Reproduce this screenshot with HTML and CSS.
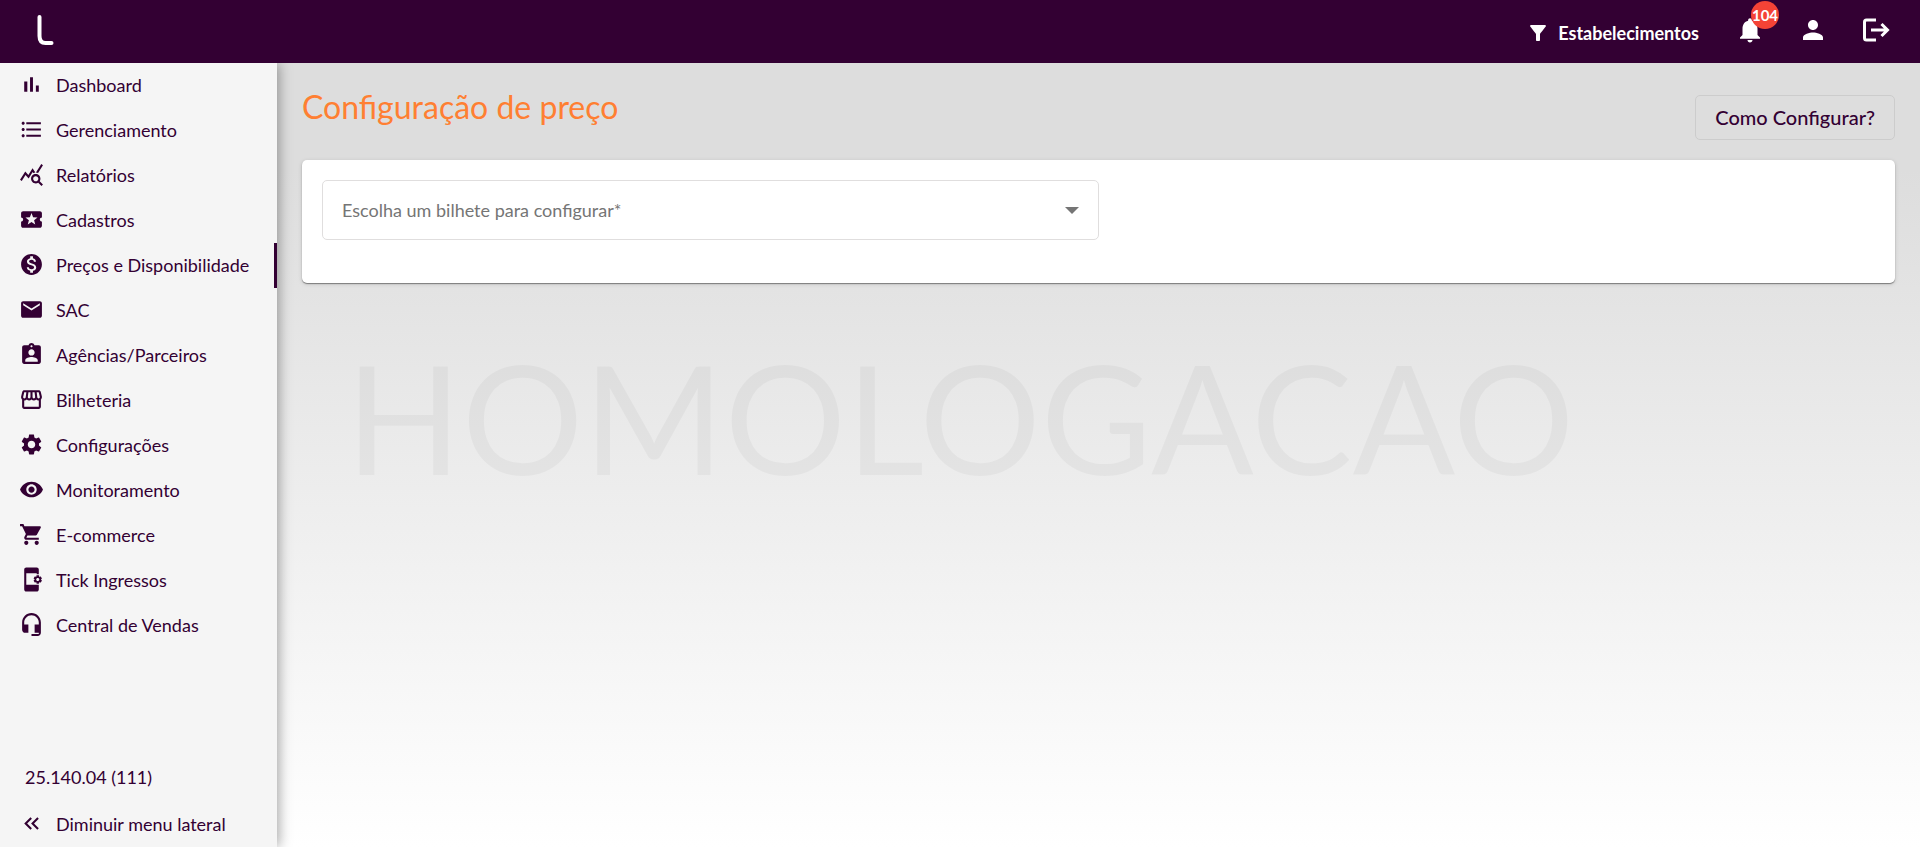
FILE: index.html
```html
<!DOCTYPE html>
<html lang="pt-BR">
<head>
<meta charset="utf-8">
<meta name="viewport" content="width=device-width, initial-scale=1">
<title>Configuração de preço</title>
<link rel="stylesheet" href="styles.css">
</head>
<body class="page">
<header class="topbar">
  <a class="logo" href="#" aria-label="Início"><svg viewBox="0 0 16 30" class="logo-mark"><path d="M2 2v19q0 7 6 7h6" fill="none" stroke="currentColor" stroke-width="4" stroke-linecap="round"/></svg></a>
  <div class="actions">
    <button class="filter" type="button">
      <svg class="icon" viewBox="0 0 24 24"><path d="M4.25 5.61C6.27 8.2 10 13 10 13v6c0 .55.45 1 1 1h2c.55 0 1-.45 1-1v-6s3.72-4.8 5.74-7.39A.998.998 0 0 0 18.95 4H5.04c-.83 0-1.3.95-.79 1.61z"/></svg>
      <span>Estabelecimentos</span>
    </button>
    <button class="action" type="button" aria-label="Notificações">
      <svg class="icon-lg" viewBox="0 0 24 24"><path d="M12 22c1.1 0 2-.9 2-2h-4c0 1.1.89 2 2 2zm6-6v-5c0-3.07-1.64-5.64-4.5-6.32V4c0-.83-.67-1.5-1.5-1.5s-1.5.67-1.5 1.5v.68C7.63 5.36 6 7.92 6 11v5l-2 2v1h16v-1l-2-2z"/></svg>
      <span class="badge">104</span>
    </button>
    <button class="action" type="button" aria-label="Perfil">
      <svg class="icon-lg" viewBox="0 0 24 24"><path d="M12 12c2.21 0 4-1.79 4-4s-1.79-4-4-4-4 1.79-4 4 1.79 4 4 4zm0 2c-2.67 0-8 1.34-8 4v2h16v-2c0-2.66-5.33-4-8-4z"/></svg>
    </button>
    <button class="action" type="button" aria-label="Sair">
      <svg class="icon-lg" viewBox="0 0 30 30"><path d="M15 5H5.500Q3.500 5 3.500 7V23Q3.500 25 5.500 25H15M10 15H26M20.500 9L26.500 15L20.500 21" fill="none" stroke="currentColor" stroke-width="3"/></svg>
    </button>
  </div>
</header>
<div class="shell">
  <aside class="sidebar">
    <nav class="menu" aria-label="Menu principal">
      <a class="item" href="#"><svg class="icon-md" viewBox="0 0 24 24"><path d="M5 9.200h3V19H5zM10.600 5h2.800v14h-2.800zm5.600 8H19v6h-2.800z"/></svg>Dashboard</a>
      <a class="item" href="#"><svg class="icon-md" viewBox="0 0 24 24"><path d="M4 10.500c-.83 0-1.500.67-1.500 1.500s.67 1.500 1.500 1.500 1.500-.67 1.500-1.500-.67-1.500-1.500-1.500zm0-6c-.83 0-1.500.67-1.500 1.500S3.170 7.500 4 7.500 5.500 6.830 5.500 6 4.830 4.500 4 4.500zm0 12c-.83 0-1.500.68-1.500 1.500s.68 1.500 1.500 1.500 1.500-.68 1.500-1.500-.67-1.500-1.500-1.500zM7 19h14v-2H7v2zm0-6h14v-2H7v2zm0-8v2h14V5H7z"/></svg>Gerenciamento</a>
      <a class="item" href="#"><svg class="icon-md" viewBox="0 0 24 24"><path d="M19.880 18.470c.44-.7.7-1.510.7-2.390 0-2.490-2.010-4.500-4.500-4.500s-4.500 2.010-4.500 4.500 2.010 4.500 4.490 4.500c.88 0 1.700-.26 2.390-.7L21.580 23 23 21.580l-3.120-3.110zm-3.800.11c-1.380 0-2.500-1.120-2.500-2.500s1.120-2.500 2.500-2.500 2.500 1.120 2.500 2.500-1.120 2.500-2.500 2.500zm-.36-8.500c-.74.02-1.450.18-2.100.45l-.55-.83-3.800 6.180-3.010-3.520-3.630 5.810L1 17l5-8 3 3.500L13 6l2.720 4.080zm2.590.5c-.64-.28-1.330-.45-2.050-.49L21.380 2 23 3.180l-4.690 7.400z"/></svg>Relatórios</a>
      <a class="item" href="#"><svg class="icon-md" viewBox="0 0 24 24"><path d="M20 12c0-1.100.9-2 2-2V6c0-1.100-.9-2-2-2H4c-1.100 0-1.990.9-1.990 2v4c1.100 0 1.990.9 1.990 2s-.89 2-2 2v4c0 1.100.9 2 2 2h16c1.100 0 2-.9 2-2v-4c-1.100 0-2-.9-2-2zm-4.420 4.800L12 14.500l-3.580 2.300 1.080-4.120-3.290-2.690 4.240-.25L12 5.800l1.540 3.950 4.240.25-3.290 2.690 1.090 4.110z"/></svg>Cadastros</a>
      <a class="item current" href="#" aria-current="page"><svg class="icon-md" viewBox="0 0 24 24"><path d="M12 2C6.480 2 2 6.480 2 12s4.480 10 10 10 10-4.480 10-10S17.520 2 12 2zm1.410 16.090V20h-2.670v-1.930c-1.710-.36-3.160-1.460-3.270-3.400h1.960c.1 1.050.82 1.870 2.650 1.870 1.960 0 2.400-.98 2.400-1.590 0-.83-.44-1.610-2.670-2.140-2.480-.6-4.180-1.620-4.180-3.670 0-1.720 1.390-2.840 3.110-3.210V4h2.670v1.950c1.860.45 2.790 1.860 2.850 3.390H14.300c-.05-1.110-.64-1.870-2.220-1.870-1.500 0-2.400.68-2.400 1.640 0 .84.65 1.390 2.670 1.910s4.180 1.390 4.180 3.910c-.01 1.830-1.380 2.830-3.120 3.160z"/></svg>Preços e Disponibilidade</a>
      <a class="item" href="#"><svg class="icon-md" viewBox="0 0 24 24"><path d="M20 4H4c-1.100 0-1.990.9-1.990 2L2 18c0 1.100.9 2 2 2h16c1.100 0 2-.9 2-2V6c0-1.100-.9-2-2-2zm0 4l-8 5-8-5V6l8 5 8-5v2z"/></svg>SAC</a>
      <a class="item" href="#"><svg class="icon-md" viewBox="0 0 24 24"><path d="M19 3h-4.180C14.400 1.840 13.300 1 12 1c-1.300 0-2.400.84-2.820 2H5c-1.100 0-2 .9-2 2v14c0 1.100.9 2 2 2h14c1.100 0 2-.9 2-2V5c0-1.100-.9-2-2-2zm-7 0c.55 0 1 .45 1 1s-.45 1-1 1-1-.45-1-1 .45-1 1-1zm0 4c1.660 0 3 1.340 3 3s-1.340 3-3 3-3-1.340-3-3 1.340-3 3-3zm6 12H6v-1.400c0-2 4-3.100 6-3.100s6 1.100 6 3.100V19z"/></svg>Agências/Parceiros</a>
      <a class="item" href="#"><svg class="icon-md" viewBox="0 0 24 24"><path d="M21.900 8.890l-1.050-4.370c-.22-.9-1-1.520-1.910-1.520H5.050c-.9 0-1.690.63-1.900 1.520L2.100 8.890c-.24 1.020-.02 2.060.62 2.880.08.11.19.19.28.29V19c0 1.100.9 2 2 2h14c1.100 0 2-.9 2-2v-6.940c.09-.09.2-.18.28-.28.64-.82.87-1.870.62-2.890zm-2.990-3.900l1.050 4.370c.1.42.01.84-.25 1.170-.14.18-.44.47-.94.47-.61 0-1.140-.49-1.210-1.140L16.980 5l1.930-.01zM13 5h1.960l.54 4.520c.05.39-.07.78-.33 1.070-.22.26-.54.41-.95.41-.67 0-1.220-.59-1.220-1.310V5zM8.490 9.520L9.040 5H11v4.690c0 .72-.55 1.310-1.290 1.310-.34 0-.65-.15-.89-.41-.25-.29-.37-.68-.33-1.070zm-4.450-.16L5.050 5h1.970l-.58 4.860c-.08.65-.6 1.140-1.210 1.140-.49 0-.8-.29-.93-.47-.27-.32-.36-.75-.26-1.170zM5 19v-6.030c.08.01.15.03.23.03.87 0 1.660-.36 2.240-.95.6.6 1.400.95 2.310.95.87 0 1.650-.36 2.230-.93.59.57 1.390.93 2.290.93.84 0 1.640-.35 2.240-.95.58.59 1.370.95 2.240.95.08 0 .15-.02.23-.03V19H5z"/></svg>Bilheteria</a>
      <a class="item" href="#"><svg class="icon-md" viewBox="0 0 24 24"><path d="M19.140 12.940c.04-.3.06-.61.06-.94 0-.32-.02-.64-.07-.94l2.030-1.580c.18-.14.23-.41.12-.61l-1.920-3.320c-.12-.22-.37-.29-.59-.22l-2.390.96c-.5-.38-1.030-.7-1.620-.94l-.36-2.540c-.04-.24-.24-.41-.48-.41h-3.840c-.24 0-.43.17-.47.41l-.36 2.540c-.59.24-1.130.57-1.620.94l-2.390-.96c-.22-.08-.47 0-.59.22L2.740 8.870c-.12.21-.08.47.12.61l2.030 1.580c-.05.3-.09.63-.09.94s.02.64.07.94l-2.030 1.580c-.18.14-.23.41-.12.61l1.920 3.320c.12.22.37.29.59.22l2.390-.96c.5.38 1.030.7 1.620.94l.36 2.540c.05.24.24.41.48.41h3.840c.24 0 .44-.17.47-.41l.36-2.540c.59-.24 1.130-.56 1.620-.94l2.390.96c.22.08.47 0 .59-.22l1.920-3.320c.12-.22.07-.47-.12-.61l-2.010-1.580zM12 15.600c-1.980 0-3.600-1.620-3.600-3.600s1.620-3.600 3.600-3.600 3.600 1.620 3.600 3.600-1.620 3.600-3.600 3.600z"/></svg>Configurações</a>
      <a class="item" href="#"><svg class="icon-md" viewBox="0 0 24 24"><path d="M12 4.500C7 4.500 2.730 7.610 1 12c1.730 4.390 6 7.500 11 7.500s9.270-3.110 11-7.500c-1.730-4.390-6-7.500-11-7.500zM12 17c-2.760 0-5-2.240-5-5s2.240-5 5-5 5 2.240 5 5-2.240 5-5 5zm0-8c-1.660 0-3 1.340-3 3s1.340 3 3 3 3-1.340 3-3-1.340-3-3-3z"/></svg>Monitoramento</a>
      <a class="item" href="#"><svg class="icon-md" viewBox="0 0 24 24"><path d="M7 18c-1.100 0-1.990.9-1.990 2S5.900 22 7 22s2-.9 2-2-.9-2-2-2zM1 2v2h2l3.600 7.590-1.350 2.450c-.16.28-.25.61-.25.96 0 1.100.9 2 2 2h12v-2H7.420c-.14 0-.25-.11-.25-.25l.03-.12.9-1.630h7.450c.75 0 1.410-.41 1.750-1.030l3.580-6.490c.08-.14.12-.31.12-.48 0-.55-.45-1-1-1H5.210l-.94-2H1zm16 16c-1.100 0-1.990.9-1.990 2s.89 2 1.990 2 2-.9 2-2-.9-2-2-2z"/></svg>E-commerce</a>
      <a class="item" href="#"><svg class="icon-md" viewBox="0 0 24 24"><path d="M21.810 12.740l-.82-.63v-.22l.8-.63c.16-.12.2-.34.1-.51l-.85-1.480c-.07-.13-.21-.2-.35-.2-.05 0-.1.01-.15.03l-.95.38c-.08-.05-.11-.07-.19-.11l-.15-1.010c-.03-.21-.2-.36-.4-.36h-1.710c-.2 0-.37.15-.4.34l-.14 1.010c-.03.02-.07.03-.1.050l-.09.06-.95-.38c-.05-.02-.1-.03-.15-.03-.14 0-.27.07-.35.2l-.85 1.480c-.1.17-.06.39.1.51l.8.63v.23l-.8.63c-.16.12-.2.34-.1.51l.85 1.480c.07.13.21.2.35.2.05 0 .1-.01.15-.03l.95-.37c.08.05.12.07.2.11l.15 1.010c.03.2.2.34.4.34h1.710c.2 0 .37-.15.4-.34l.15-1.010c.03-.02.07-.03.1-.05l.09-.06.95.38c.05.02.1.03.15.03.14 0 .27-.07.35-.2l.85-1.480c.1-.17.06-.39-.1-.51zM18 13.500c-.83 0-1.500-.67-1.500-1.500s.67-1.500 1.500-1.500 1.500.67 1.500 1.500-.67 1.500-1.500 1.500zM17 17H7V6h10v1h2V2.500C19 1.400 18.100.5 17 .5H7C5.900.5 5 1.400 5 2.500v19c0 1.100.9 2 2 2h10c1.100 0 2-.9 2-2V17h-2z"/></svg>Tick Ingressos</a>
      <a class="item" href="#"><svg class="icon-md" viewBox="0 0 24 24"><path d="M12 1c-4.970 0-9 4.030-9 9v7c0 1.660 1.340 3 3 3h3v-8H5v-2c0-3.870 3.130-7 7-7s7 3.130 7 7v2h-4v8h4v1h-7v2h6c1.660 0 3-1.340 3-3V10c0-4.970-4.030-9-9-9z"/></svg>Central de Vendas</a>
    </nav>
    <div class="sidebar-foot">
      <span class="version">25.140.04 (111)</span>
      <button class="item collapse" type="button"><svg class="icon-md" viewBox="0 0 24 24"><path d="M17.590 18L19 16.590 14.420 12 19 7.410 17.590 6l-6 6zM11 18l1.410-1.410L7.830 12l4.580-4.590L11 6l-6 6z"/></svg>Diminuir menu lateral</button>
    </div>
  </aside>
  <main class="content">
    <div class="heading">
      <h1 class="title">Configuração de preço</h1>
      <button class="help" type="button">Como Configurar?</button>
    </div>
    <section class="card">
      <div class="field">
        <select class="select" id="bilhete" required><option value=""></option></select>
        <label class="label" for="bilhete">Escolha um bilhete para configurar*</label>
        <svg class="arrow" viewBox="0 0 14 7"><path d="M0 0h14L7 7z"/></svg>
      </div>
    </section>
  </main>
</div>
<div class="watermark">HOMOLOGACAO</div>
</body>
</html>
```
FILE: styles.css
```css
* { box-sizing: border-box; }

.page {
  margin: 0;
  min-height: 100vh;
  display: flex;
  flex-direction: column;
  background: linear-gradient(#ddd 20%, #fff 100%);
  color: #303;
  font: 18px/24px Lato, "Open Sans", sans-serif;
}

button, select { font: inherit; color: inherit; }
button { border: 0; background: none; padding: 0; cursor: pointer; }
svg { display: block; flex: none; fill: currentColor; }

.icon { width: 24px; height: 24px; }
.icon-md { width: 25px; height: 25px; }
.icon-lg { width: 30px; height: 30px; }

.topbar {
  height: 63px;
  display: flex;
  align-items: center;
  justify-content: space-between;
  padding: 0 29px 3px 37px;
  background: #303;
  color: #fff;
}
.logo { color: inherit; }
.logo-mark { width: 17px; height: 30px; }
.actions { display: flex; align-items: center; gap: 33px; }
.filter { display: flex; align-items: center; gap: 8px; padding: 5px 3px 0 0; font-weight: 700; }
.action { position: relative; }
.badge {
  position: absolute;
  top: -14px;
  left: 16px;
  width: 28px;
  height: 28px;
  border-radius: 50%;
  background: #f44336;
  font-size: 15px;
  line-height: 28px;
  font-weight: 700;
  text-align: center;
}

.shell { flex: 1; display: flex; }
.sidebar {
  width: 277px;
  flex: none;
  display: flex;
  flex-direction: column;
  justify-content: space-between;
  background: #f5f5f5;
  box-shadow: 2px 0 12px rgba(0, 0, 0, .35);
  clip-path: inset(0 -24px 0 0);
}
.menu { display: flex; flex-direction: column; }
.item {
  display: flex;
  align-items: center;
  gap: 12px;
  height: 45px;
  padding: 0 0 2px 19px;
  color: inherit;
  text-decoration: none;
}
.current { border-right: 3px solid #303; }
.sidebar-foot { display: flex; flex-direction: column; gap: 13px; }
.version { padding-left: 25px; }

.content { flex: 1; padding: 25px; }
.heading { display: flex; justify-content: space-between; padding-bottom: 20px; }
.title { margin: 0; color: #ff7f32; font-size: 32px; line-height: 38px; font-weight: 400; }
.help {
  height: 45px;
  margin-top: 7px;
  padding: 0 19px 2px;
  border: 1px solid #ccc;
  border-radius: 5px;
  font-size: 20px;
  font-weight: 500;
}
.card {
  padding: 20px 20px 43px;
  border-radius: 5px;
  background: #fff;
  box-shadow: 0 1px 1px rgba(0, 0, 0, .4), 0 1px 4px rgba(0, 0, 0, .15);
}
.field { position: relative; width: 50%; }
.select {
  display: block;
  width: 100%;
  height: 60px;
  padding: 0 20px;
  border: 1px solid #e0dede;
  border-radius: 5px;
  background: #fff;
  appearance: none;
}
.label {
  position: absolute;
  left: 20px;
  top: 18px;
  color: #757575;
  pointer-events: none;
}
.arrow {
  position: absolute;
  right: 20px;
  top: 27px;
  width: 14px;
  height: 7px;
  color: #757575;
  pointer-events: none;
}

.watermark {
  position: fixed;
  inset: 0;
  display: grid;
  place-items: center;
  padding-bottom: 16px;
  color: rgba(0, 0, 0, .035);
  font-size: 152px;
  line-height: 180px;
  pointer-events: none;
}
```
